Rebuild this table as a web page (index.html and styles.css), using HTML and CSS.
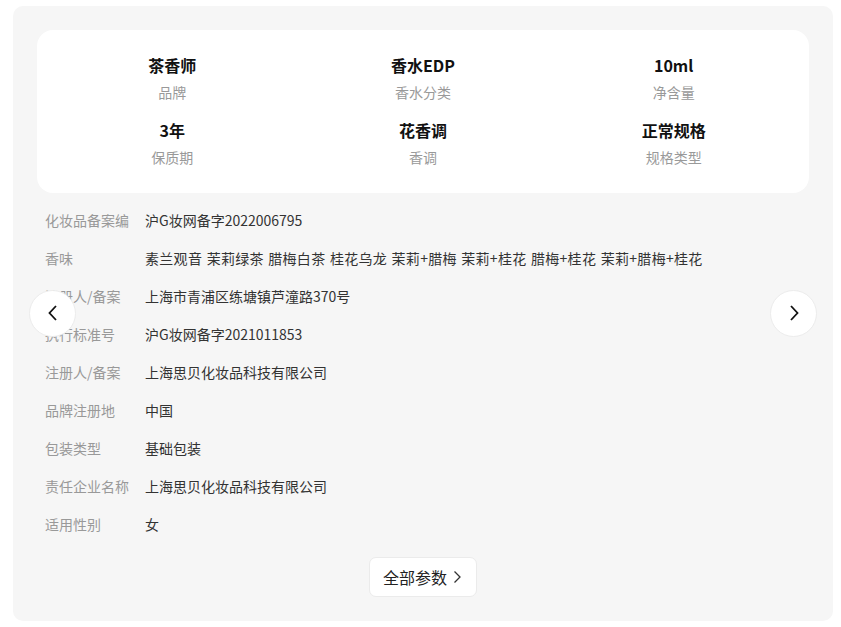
FILE: index.html
```html
<!DOCTYPE html>
<html lang="zh-CN">
<head>
    <meta charset="UTF-8">
    <meta name="viewport" content="width=device-width, initial-scale=1.0">
    <title>商品参数</title>
    <link rel="stylesheet" href="styles.css">
</head>
<body>
    <div class="panel">
        <div class="summary">
            <div class="summary-item">
                <div class="summary-value">茶香师</div>
                <div class="summary-label">品牌</div>
            </div>
            <div class="summary-item">
                <div class="summary-value">香水EDP</div>
                <div class="summary-label">香水分类</div>
            </div>
            <div class="summary-item">
                <div class="summary-value">10ml</div>
                <div class="summary-label">净含量</div>
            </div>
            <div class="summary-item">
                <div class="summary-value">3年</div>
                <div class="summary-label">保质期</div>
            </div>
            <div class="summary-item">
                <div class="summary-value">花香调</div>
                <div class="summary-label">香调</div>
            </div>
            <div class="summary-item">
                <div class="summary-value">正常规格</div>
                <div class="summary-label">规格类型</div>
            </div>
        </div>

        <ul class="spec-list">
            <li class="spec-row"><span class="spec-label">化妆品备案编</span><span class="spec-value">沪G妆网备字2022006795</span></li>
            <li class="spec-row"><span class="spec-label">香味</span><span class="spec-value spec-wide">素兰观音 茉莉绿茶 腊梅白茶 桂花乌龙 茉莉+腊梅 茉莉+桂花 腊梅+桂花 茉莉+腊梅+桂花</span></li>
            <li class="spec-row"><span class="spec-label">注册人/备案</span><span class="spec-value">上海市青浦区练塘镇芦潼路370号</span></li>
            <li class="spec-row"><span class="spec-label">执行标准号</span><span class="spec-value">沪G妆网备字2021011853</span></li>
            <li class="spec-row"><span class="spec-label">注册人/备案</span><span class="spec-value">上海思贝化妆品科技有限公司</span></li>
            <li class="spec-row"><span class="spec-label">品牌注册地</span><span class="spec-value">中国</span></li>
            <li class="spec-row"><span class="spec-label">包装类型</span><span class="spec-value">基础包装</span></li>
            <li class="spec-row"><span class="spec-label">责任企业名称</span><span class="spec-value">上海思贝化妆品科技有限公司</span></li>
            <li class="spec-row"><span class="spec-label">适用性别</span><span class="spec-value">女</span></li>
        </ul>

        <div class="more">
            <button class="more-button" type="button">
                全部参数
                <svg width="9" height="14" viewBox="0 0 9 14"><path d="M1.5 1.5 L7 7 L1.5 12.5" fill="none" stroke="#333" stroke-width="1.3"/></svg>
            </button>
        </div>

        <button class="nav-button nav-prev" type="button" aria-label="上一页">
            <svg width="12" height="18" viewBox="0 0 12 18"><path d="M9 2 L2.5 9 L9 16" fill="none" stroke="#111" stroke-width="1.8"/></svg>
        </button>
        <button class="nav-button nav-next" type="button" aria-label="下一页">
            <svg width="12" height="18" viewBox="0 0 12 18"><path d="M3 2 L9.5 9 L3 16" fill="none" stroke="#111" stroke-width="1.8"/></svg>
        </button>
    </div>
</body>
</html>
```

FILE: styles.css
```css
* {
    box-sizing: border-box;
}

body {
    margin: 0;
    padding: 6px 8px 6px 13px;
    background: #fff;
    font-family: "Noto Sans CJK SC", "Noto Sans", sans-serif;
    color: #333;
}

.panel {
    position: relative;
    width: 820px;
    height: 615px;
    padding: 24px 24px 23px;
    background: #f6f6f6;
    border-radius: 10px;
}

.summary {
    display: grid;
    grid-template-columns: repeat(3, 1fr);
    row-gap: 15px;
    padding: 23px 10px 25px;
    background: #fff;
    border-radius: 16px;
    text-align: center;
}

.summary-value {
    font-size: 16px;
    line-height: 24px;
    font-weight: bold;
    color: #111;
}

.summary-label {
    margin-top: 4px;
    font-size: 14px;
    line-height: 22px;
    color: #999;
}

.spec-list {
    list-style: none;
    margin: 8px 0 0;
    padding: 0 8px;
}

.spec-row {
    display: flex;
    align-items: center;
    height: 38px;
    font-size: 14px;
}

.spec-label {
    flex: none;
    width: 100px;
    white-space: nowrap;
    color: #999;
}

.spec-value {
    white-space: nowrap;
    color: #333;
}

.spec-wide {
    word-spacing: 1px;
    letter-spacing: 0.3px;
}

.more {
    display: flex;
    justify-content: center;
    margin-top: 14px;
}

.more-button {
    display: flex;
    align-items: center;
    gap: 6px;
    height: 40px;
    padding: 0 14px 0 13px;
    background: #fff;
    border: 1px solid #ebebeb;
    border-radius: 7px;
    font-family: inherit;
    font-size: 16px;
    color: #222;
    cursor: pointer;
}

.nav-button {
    position: absolute;
    top: 50%;
    width: 47px;
    height: 47px;
    margin-top: -24px;
    display: flex;
    align-items: center;
    justify-content: center;
    padding: 0;
    background: #fff;
    border: 1px solid #ececec;
    border-radius: 50%;
    cursor: pointer;
}

.nav-prev {
    left: 16px;
}

.nav-next {
    right: 16px;
}
```
